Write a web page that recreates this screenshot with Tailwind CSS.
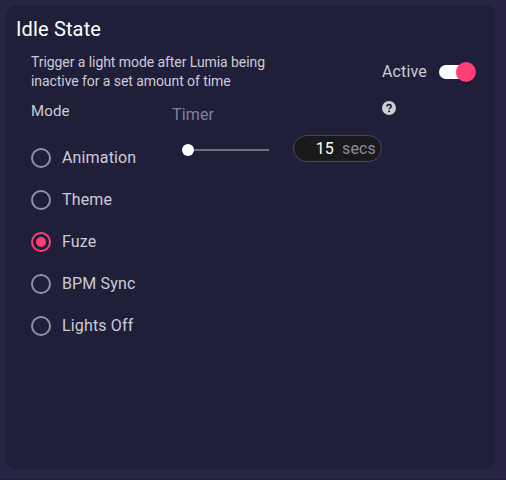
<!DOCTYPE html>
<html lang="en">
<head>
<meta charset="utf-8">
<title>Idle State</title>
<script src="https://cdn.jsdelivr.net/npm/@tailwindcss/browser@4"></script>
</head>
<body class="h-[480px] w-[506px] overflow-hidden border-b-[1px] border-[#211d3c] bg-[#272444] pl-[6px] pt-[5px] font-['Roboto',sans-serif] text-[#cccbd6]">
<main class="h-[465px] w-[489px] rounded-[10px] bg-[#201f39] pt-[10px]">
  <h1 class="h-[28px] pl-[10px] text-[20px] leading-[28px] tracking-[0.15px] text-white">Idle State</h1>
  <div class="flex h-[47px] pl-[25px]">
    <p class="mt-[10px] w-[351px] text-[14px] leading-[19px] tracking-[-0.07px]">Trigger a light mode after Lumia being<br>inactive for a set amount of time</p>
    <label class="mt-[19px] flex h-[20px] items-center text-[16px] leading-[20px] tracking-[0.15px]">
      <span class="w-[57px]">Active</span>
      <span class="relative h-[14px] w-[34px] rounded-full bg-white"><span class="absolute -top-[3px] left-[17px] size-[20px] rounded-full bg-[#ff4077] shadow-[0_1px_2px_rgba(0,0,0,0.3)]"></span></span>
    </label>
  </div>
  <div class="flex pl-[25px]">
    <section class="w-[141px] pt-[11px]">
      <h2 class="h-[20px] text-[15px] leading-[20px] tracking-[0.15px]">Mode</h2>
      <div class="mt-[16px] text-[16px] tracking-[0.15px]">
        <label class="flex h-[42px] items-center gap-[11px]"><span class="size-[20px] rounded-full border-2 border-[#918fa4]"></span><span>Animation</span></label>
        <label class="flex h-[42px] items-center gap-[11px]"><span class="size-[20px] rounded-full border-2 border-[#918fa4]"></span><span>Theme</span></label>
        <label class="flex h-[42px] items-center gap-[11px]"><span class="flex size-[20px] items-center justify-center rounded-full border-2 border-[#ff4077]"><span class="size-[10px] rounded-full bg-[#ff4077]"></span></span><span>Fuze</span></label>
        <label class="flex h-[42px] items-center gap-[11px]"><span class="size-[20px] rounded-full border-2 border-[#918fa4]"></span><span>BPM Sync</span></label>
        <label class="flex h-[42px] items-center gap-[11px]"><span class="size-[20px] rounded-full border-2 border-[#918fa4]"></span><span>Lights Off</span></label>
      </div>
    </section>
    <section class="w-[210px] pt-[15px]">
      <h2 class="h-[20px] text-[16px] leading-[20px] tracking-[0.15px] text-[#8380a0]">Timer</h2>
      <div class="mt-[10px] flex h-[27px] items-center">
        <div class="mt-[2px] ml-[10px] flex w-[87px] items-center"><span class="size-[12px] rounded-full bg-white"></span><span class="h-[2px] flex-1 bg-[#72707f]"></span></div>
        <div class="ml-[24px] flex h-[27px] w-[89px] items-center justify-end gap-[8px] rounded-full border border-[#46427a] bg-[#1a1a1a] pr-[5px] text-[16px] tracking-[0.15px]"><span class="text-white">15</span><span class="text-[#8c8a9f]">secs</span></div>
      </div>
    </section>
    <svg class="mt-[11px] size-[14px]" viewBox="0 0 14 14" fill="none"><circle cx="7" cy="7" r="7" fill="#cccbd6"/><path d="M4.900 5.500C4.900 4.200 5.800 3.600 7 3.600s2.200.7 2.200 1.800c0 1.500-2 1.500-2 2.900" stroke="#201f39" stroke-width="1.600"/><circle cx="7.100" cy="10.300" r="1" fill="#201f39"/></svg>
  </div>
</main>
</body>
</html>
